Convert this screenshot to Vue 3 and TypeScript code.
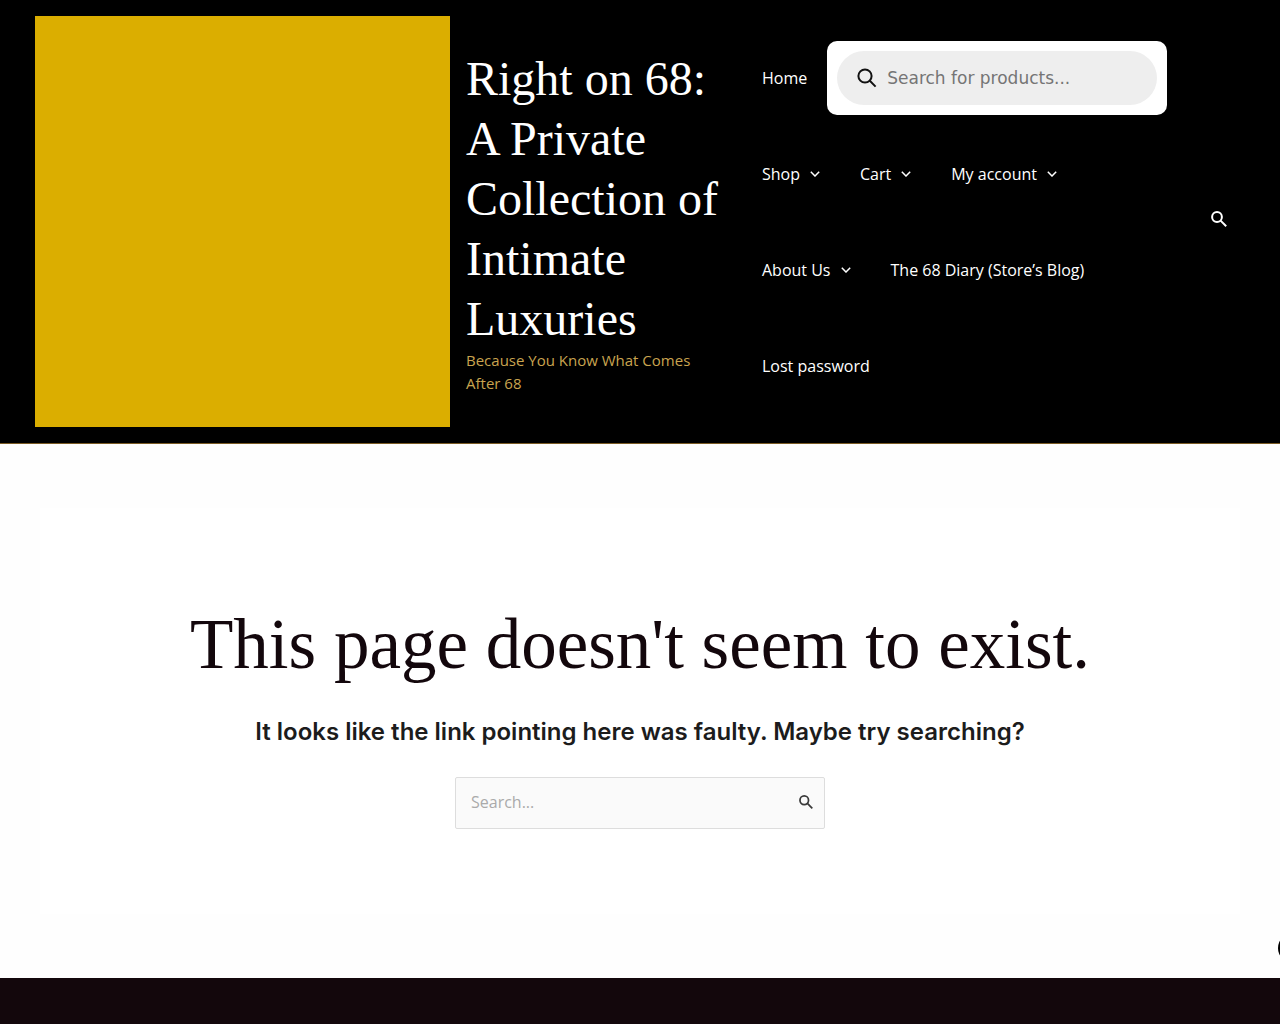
<script setup lang="ts">
import { ref } from 'vue'

interface MenuItem {
  label: string
  hasSubmenu: boolean
}

const menu: MenuItem[] = [
  { label: 'Shop', hasSubmenu: true },
  { label: 'Cart', hasSubmenu: true },
  { label: 'My account', hasSubmenu: true },
  { label: 'About Us', hasSubmenu: true },
  { label: 'The 68 Diary (Store’s Blog)', hasSubmenu: false },
  { label: 'Lost password', hasSubmenu: false },
]

const productQuery = ref('')
const siteQuery = ref('')
</script>

<template>
  <div class="page">
    <header class="site-header">
      <a class="logo" href="#" aria-label="Right on 68 home"></a>
      <div class="branding">
        <p class="site-title"><a href="#">Right on 68: A Private Collection of Intimate Luxuries</a></p>
        <p class="tagline">Because You Know What Comes After 68</p>
      </div>
      <nav class="main-nav" aria-label="Main">
        <ul class="menu">
          <li class="menu-item"><a href="#">Home</a></li>
          <li class="menu-search">
            <form class="product-search" role="search" @submit.prevent>
              <button class="plain-button" type="submit" aria-label="Search products">
                <svg width="20" height="20" viewBox="0 0 20 20" fill="none" stroke="#111" stroke-width="2">
                  <circle cx="8" cy="8" r="6.6" />
                  <path d="M12.8 12.8 18.6 18.6" />
                </svg>
              </button>
              <input v-model="productQuery" type="search" aria-label="Products search" placeholder="Search for products..." />
            </form>
          </li>
          <li v-for="item in menu" :key="item.label" class="menu-item">
            <a href="#">
              {{ item.label }}
              <svg v-if="item.hasSubmenu" width="10" height="6" viewBox="0 0 10 6" fill="none" stroke="currentColor" stroke-width="1.5">
                <path d="M.8.8 5 5 9.2.8" />
              </svg>
            </a>
          </li>
        </ul>
      </nav>
      <button class="plain-button header-search" type="button" aria-label="Open search">
        <svg width="16" height="16" viewBox="0 0 16 16" fill="none" stroke="currentColor" stroke-width="2">
          <circle cx="6" cy="6" r="4.9" />
          <path d="M9.6 9.6 15.2 15.2" />
        </svg>
      </button>
    </header>

    <main class="content">
      <section class="not-found">
        <h1>This page doesn't seem to exist.</h1>
        <p class="lead">It looks like the link pointing here was faulty. Maybe try searching?</p>
        <form class="site-search" role="search" @submit.prevent>
          <input v-model="siteQuery" type="search" aria-label="Search the site" placeholder="Search..." />
          <button class="plain-button" type="submit" aria-label="Search">
            <svg width="14" height="14" viewBox="0 0 16 16" fill="none" stroke="#3a3a3a" stroke-width="2">
              <circle cx="6" cy="6" r="4.9" />
              <path d="M9.6 9.6 15.2 15.2" />
            </svg>
          </button>
        </form>
      </section>
    </main>

    <footer class="site-footer"></footer>
    <button class="side-toggle" type="button" aria-label="Open side panel"></button>
  </div>
</template>

<style>
body {
  margin: 0;
}
</style>

<style scoped>
.page {
  display: flex;
  flex-direction: column;
  min-height: 100vh;
  background: #fefefe;
  font-family: "Open Sans", sans-serif;
  font-size: 16px;
  color: #1c1c1c;
}

a {
  color: inherit;
  text-decoration: none;
}

p,
h1,
ul {
  margin: 0;
  padding: 0;
}

.plain-button {
  display: flex;
  padding: 0;
  border: 0;
  background: none;
  color: inherit;
  cursor: pointer;
}

.site-header {
  display: flex;
  align-items: center;
  padding: 16px 35px;
  border-bottom: 1px solid #7a5a24;
  background: #000;
  color: #fff;
}

.logo {
  flex: 0 0 415px;
  height: 411px;
  background: #dbae00;
}

.branding {
  flex: 0 0 260px;
  margin-left: 16px;
}

.site-title {
  font-family: "Liberation Serif", serif;
  font-size: 48px;
  line-height: 60px;
}

.tagline {
  color: #c9a44f;
  font-size: 15px;
  line-height: 23px;
}

.main-nav {
  flex: 1;
  margin-left: 16px;
}

.menu {
  display: flex;
  flex-wrap: wrap;
  align-items: center;
  list-style: none;
}

.menu-item a {
  display: flex;
  align-items: center;
  gap: 10px;
  padding: 0 20px;
  line-height: 96px;
}

.menu-search {
  flex: 0 1 340px;
  box-sizing: border-box;
  padding: 10px;
  border-radius: 10px;
  background: #fff;
}

.product-search {
  display: flex;
  align-items: center;
  gap: 10px;
  height: 54px;
  padding: 0 20px;
  border-radius: 27px;
  background: #eee;
}

input {
  flex: 1;
  min-width: 0;
  padding: 0;
  border: 0;
  outline: 0;
  background: none;
  font: inherit;
}

.product-search input {
  font-family: "DejaVu Sans", sans-serif;
  font-size: 17px;
}

.product-search input::placeholder {
  color: #757575;
}

.header-search {
  margin: 0 18px 6px 24px;
}

.content {
  padding: 64px 40px;
}

.not-found {
  display: flex;
  flex-direction: column;
  align-items: center;
  padding: 90px 20px 85px;
  background: #fff;
  text-align: center;
}

h1 {
  color: #13070c;
  font-family: "Liberation Serif", serif;
  font-size: 71px;
  font-weight: 400;
  line-height: 92px;
}

.lead {
  margin: 22px 0 25px;
  font-family: Inter, sans-serif;
  font-size: 24px;
  font-weight: 600;
  line-height: 40px;
}

.site-search {
  display: flex;
  align-items: center;
  box-sizing: border-box;
  width: 370px;
  max-width: 100%;
  height: 52px;
  padding: 0 11px 2px 15px;
  border: 1px solid #ddd;
  border-radius: 2px;
  background: #fafafa;
}

.site-search input::placeholder {
  color: #aaa;
}

.site-footer {
  flex: 1;
  min-height: 46px;
  background: #13070c;
}

.side-toggle {
  position: fixed;
  right: -28px;
  bottom: 61px;
  width: 30px;
  height: 30px;
  padding: 0;
  border: 0;
  border-radius: 50%;
  background: #000;
}
</style>
